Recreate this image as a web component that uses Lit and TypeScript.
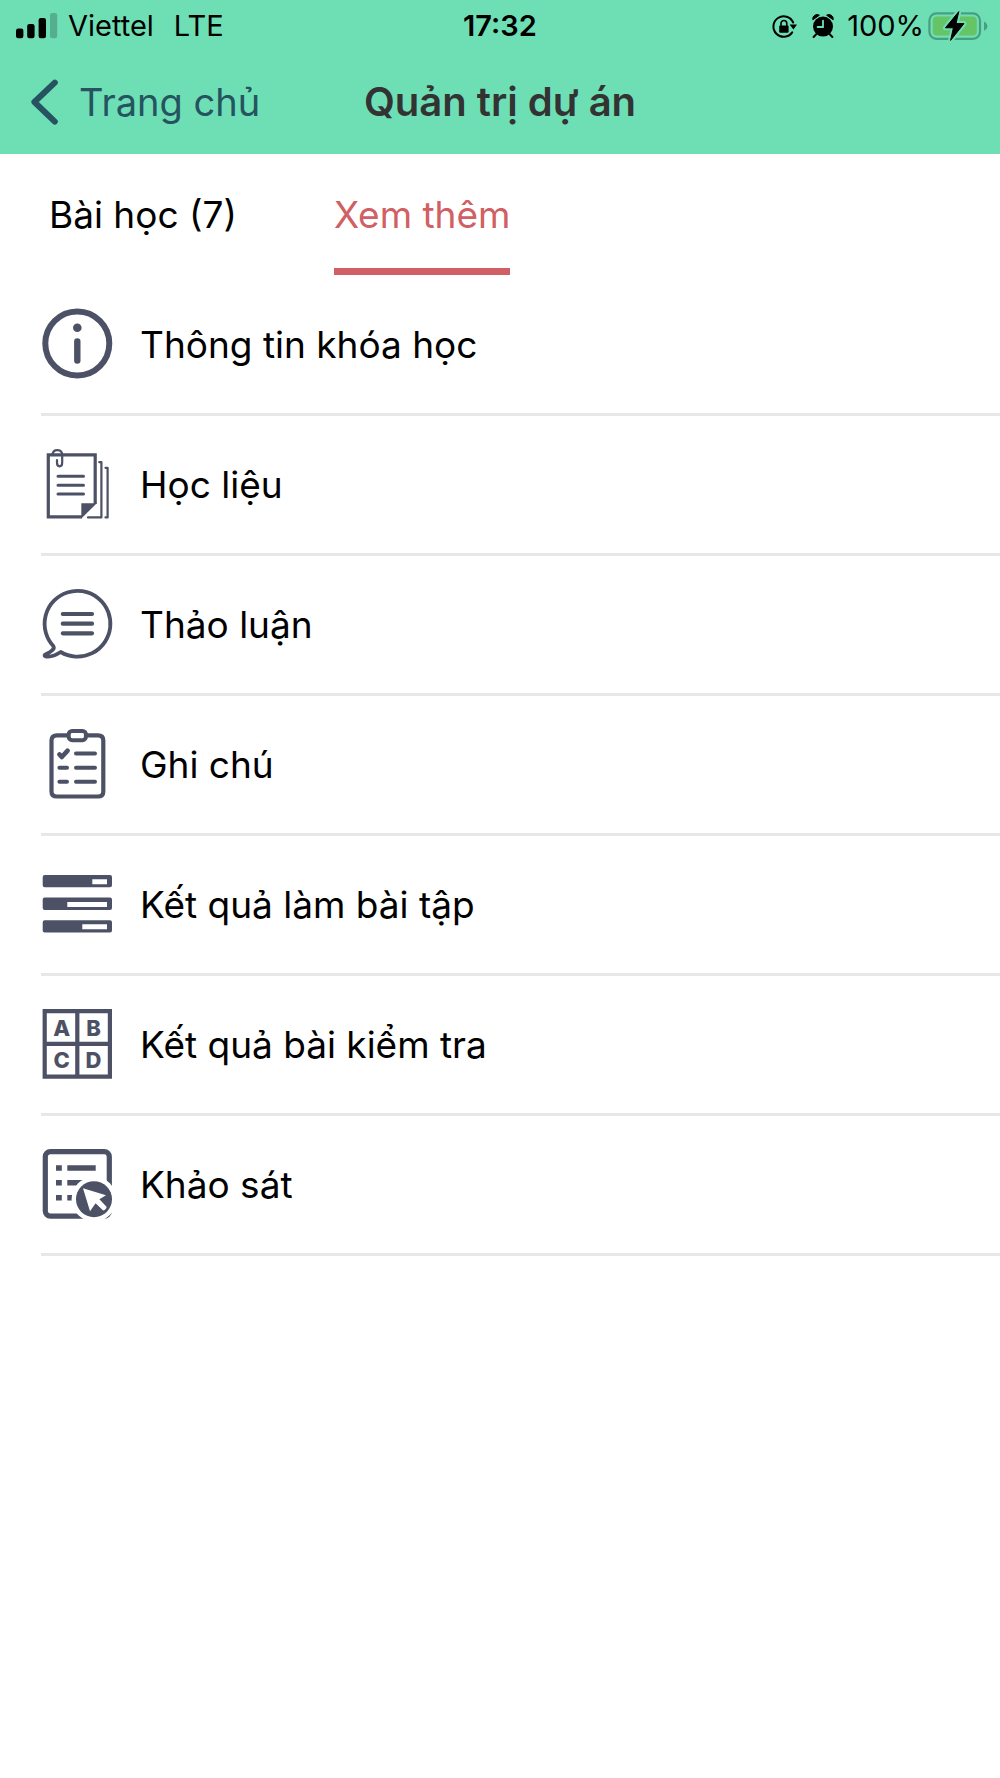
import { LitElement, html, css, svg, TemplateResult } from "lit";
import { customElement, state } from "lit/decorators.js";

interface MenuEntry {
  label: string;
  icon: TemplateResult;
}

const infoIcon = svg`
  <circle class="line" cx="35.3" cy="34.5" r="32" stroke-width="6"/>
  <circle class="solid" cx="35.3" cy="18.7" r="4.3"/>
  <path class="line" d="M35.3 32.4V51.6" stroke-width="6.4"/>`;

const documentsIcon = svg`
  <path class="line square" d="M40 67.8H6.3V5.8H53.2V55" stroke-width="3.2"/>
  <path class="solid" d="M39.3 54.3H54.8L39.3 69.4Z"/>
  <path class="line" d="M10.6 5C11.4-.3 20.2-.3 20.2 6V13.6C20.2 18.6 15 18.6 15 13.6V11" stroke-width="2.2"/>
  <path class="line" d="M16 27.3H41.5M16 36.3H41.5M16 45H41.5" stroke-width="3"/>
  <path class="line" d="M57.3 13.2H59.4V68.4H46M63.5 18.8H65.6V68.4H63.5" stroke-width="2.2"/>`;

const chatIcon = svg`
  <path class="line" d="M11.3 57A32.9 32.9 0 1 1 18.7 63C13.5 66.4 7.5 68.2 3.6 67.3C2 66.9 2.4 65.8 4.2 65.1C8.4 63.2 13.4 60 11.3 57Z" stroke-width="3.8"/>
  <path class="line" d="M20.8 25H50M20.8 34.7H50M20.8 44.3H50" stroke-width="4.2"/>`;

const checklistIcon = svg`
  <path class="line" d="M26 6.3H15Q9.5 6.3 9.5 11.3V62.5Q9.5 67.5 15 67.5H56Q61.3 67.5 61.3 62.5V11.3Q61.3 6.3 56 6.3H45" stroke-width="4.2"/>
  <rect class="line" x="26.7" y="2" width="17.2" height="9.2" rx="3.4" stroke-width="4"/>
  <path class="line" d="M17.4 25.4L19.8 28L25.6 21.6" stroke-width="4.6"/>
  <path class="line" d="M34 24.4H53M34 38.7H53M34 52.8H53M17.4 38.7H25M17.4 52.8H25" stroke-width="4"/>`;

const barsIcon = svg`
  <path class="solid" fill-rule="evenodd" d="M2.7 6H68Q70 6 70 8V16.3Q70 18.3 68 18.3H2.7Q.7 18.3 .7 16.3V8Q.7 6 2.7 6ZM50.3 10.3V15.3H65V10.3Z"/>
  <path class="solid" fill-rule="evenodd" d="M2.7 28.6H68Q70 28.6 70 30.6V38.9Q70 40.9 68 40.9H2.7Q.7 40.9 .7 38.9V30.6Q.7 28.6 2.7 28.6ZM25.3 32.9V37.9H65V32.9Z"/>
  <path class="solid" fill-rule="evenodd" d="M2.7 51.2H68Q70 51.2 70 53.2V61.5Q70 63.5 68 63.5H2.7Q.7 63.5 .7 61.5V53.2Q.7 51.2 2.7 51.2ZM40.3 55.3V60.3H65V55.3Z"/>`;

const choicesIcon = svg`
  <path class="line square" d="M2.7 2.1H67.9V67.7H2.7ZM35.3 2V68M2.7 34.9H68" stroke-width="4.2"/>
  <text class="letter" x="19.7" y="26.6">A</text>
  <text class="letter" x="51.5" y="26.6">B</text>
  <text class="letter" x="19.7" y="58.8">C</text>
  <text class="letter" x="51.5" y="58.8">D</text>`;

const surveyIcon = svg`
  <rect class="line" x="3.3" y="2.7" width="64" height="64.4" rx="5" stroke-width="5.2"/>
  <path class="solid" d="M14 16.2h5.8v5.6H14zM14 31h5.8v5.6H14zM14 46h5.8v5.6H14zM25.3 16.2H53.7v5.6H25.3zM25.3 31H42v5.6H25.3zM25.3 46H34v5.6H25.3z"/>
  <circle class="paper" cx="52" cy="50.2" r="22.4"/>
  <circle class="solid" cx="52" cy="50.2" r="18"/>
  <path class="paper" d="M41 39.2L64 46.3L57.4 50.2L64.3 57.4Q65 58.4 64.1 59.4L62.6 61Q61.6 61.8 60.6 60.9L53.6 54.2L48 62.2Z"/>`;

@customElement("status-bar")
export class StatusBar extends LitElement {
  static styles = css`
    :host {
      display: grid;
      grid-template-columns: 1fr auto 1fr;
      align-items: center;
      height: 51px;
      padding: 0 12px;
      font-size: 29px;
      line-height: 34px;
      color: #000;
    }
    .side {
      display: flex;
      align-items: center;
    }
    .signal {
      margin: 0 10px 0 4px;
    }
    .carrier {
      margin-right: 20px;
    }
    .time {
      font-weight: 600;
    }
    .end {
      justify-content: flex-end;
    }
    .percent {
      margin: 0 4px 0 12px;
    }
    .alarm {
      margin-left: 14px;
    }
    svg {
      display: block;
      flex: none;
    }
  `;

  render() {
    return html`
      <div class="side">
        <svg class="signal" width="42" height="26" viewBox="0 0 42 26" aria-hidden="true">
          <rect x="0" y="15.5" width="7.4" height="9.8" rx="2.2" />
          <rect x="11.2" y="11" width="7.4" height="14.3" rx="2.2" />
          <rect x="22.6" y="5" width="7.4" height="20.3" rx="2.2" />
          <rect x="34" y="0" width="7.2" height="25.3" rx="2.2" opacity=".22" />
        </svg>
        <span class="carrier">Viettel</span>
        <span>LTE</span>
      </div>
      <span class="time">17:32</span>
      <div class="side end">
        <svg width="26" height="26" viewBox="0 0 26 26" aria-hidden="true">
          <path d="M22.2 9.5A10.3 10.3 0 1 0 21.2 19.4" fill="none" stroke="#000" stroke-width="2" stroke-linecap="round" />
          <path d="M18.6 11.4H26L22.4 16.4Z" />
          <rect x="8.2" y="12.4" width="9.4" height="7.4" rx="1.2" />
          <path d="M10 13V10.4a2.9 2.9 0 0 1 5.8 0V13" fill="none" stroke="#000" stroke-width="1.6" />
        </svg>
        <svg class="alarm" width="24" height="26" viewBox="0 0 24 26" aria-hidden="true">
          <circle cx="12" cy="13.6" r="10" />
          <path d="M1.8 6.8A4.4 4.4 0 0 1 8.4 2.2ZM15.6 2.2A4.4 4.4 0 0 1 22.2 6.8Z" stroke="#000" stroke-linejoin="round" />
          <path d="M5 21.5L2.6 24M19 21.5L21.4 24" stroke="#000" stroke-width="2" stroke-linecap="round" />
          <path d="M12 7.6V14H6.6" fill="none" stroke="#6edfb5" stroke-width="1.8" stroke-linecap="round" />
        </svg>
        <span class="percent">100%</span>
        <svg width="60" height="32" viewBox="0 0 60 32" role="img" aria-label="100%">
          <rect x="1.4" y="3.4" width="50.6" height="25.4" rx="7" fill="none" stroke="#4a9e80" stroke-width="2.2" />
          <rect x="4.8" y="6.6" width="44" height="19" rx="4" fill="#65c466" />
          <path d="M56 11.4Q59.4 13 59.4 16T56 20.8Z" fill="#4a9e80" />
          <path d="M30.8 1.6L17.4 17.8H25.4L22.6 30.4L36 13.6H28Z" stroke="#6edfb5" stroke-width="5" stroke-linejoin="round" />
          <path d="M30.8 1.6L17.4 17.8H25.4L22.6 30.4L36 13.6H28Z" stroke="#000" stroke-linejoin="round" />
        </svg>
      </div>
    `;
  }
}

@customElement("course-menu")
export class CourseMenu extends LitElement {
  static properties = { entries: { attribute: false } };
  declare entries: MenuEntry[];

  constructor() {
    super();
    this.entries = [];
  }

  static styles = css`
    :host {
      display: block;
    }
    .list {
      list-style: none;
      margin: 0;
      padding: 1px 0 0 41px;
    }
    .item {
      border-bottom: 3px solid #e7e7e8;
    }
    .link {
      display: flex;
      align-items: center;
      gap: 28px;
      min-height: 136px;
      padding: 0 0 1px 1px;
      font-size: 37px;
      line-height: 46px;
      color: #000;
      text-decoration: none;
    }
    .label {
      padding-top: 2px;
    }
    .icon {
      flex: none;
      width: 70px;
      height: 70px;
      overflow: visible;
    }
    .line {
      fill: none;
      stroke: #4c5165;
      stroke-linecap: round;
      stroke-linejoin: round;
    }
    .square {
      stroke-linecap: butt;
      stroke-linejoin: miter;
    }
    .solid {
      fill: #4c5165;
    }
    .paper {
      fill: #fff;
    }
    .letter {
      fill: #4c5165;
      font-size: 22px;
      font-weight: 800;
      text-anchor: middle;
    }
  `;

  render() {
    return html`
      <ul class="list">
        ${this.entries.map(
          (entry) => html`
            <li class="item">
              <a class="link" href="#">
                <svg class="icon" viewBox="0 0 70 70" aria-hidden="true">${entry.icon}</svg>
                <span class="label">${entry.label}</span>
              </a>
            </li>
          `
        )}
      </ul>
    `;
  }
}

@customElement("app-root")
export class AppRoot extends LitElement {
  @state() private active = 1;

  private tabs = ["Bài học (7)", "Xem thêm"];

  private entries: MenuEntry[] = [
    { label: "Thông tin khóa học", icon: infoIcon },
    { label: "Học liệu", icon: documentsIcon },
    { label: "Thảo luận", icon: chatIcon },
    { label: "Ghi chú", icon: checklistIcon },
    { label: "Kết quả làm bài tập", icon: barsIcon },
    { label: "Kết quả bài kiểm tra", icon: choicesIcon },
    { label: "Khảo sát", icon: surveyIcon },
  ];

  static styles = css`
    :host {
      display: block;
      min-height: 100vh;
      background: #fff;
      font-family: Inter, "Liberation Sans", sans-serif;
    }
    .header {
      padding-bottom: 2px;
      background: #6edfb5;
    }
    .nav {
      display: grid;
      grid-template-columns: 1fr auto 1fr;
      align-items: center;
      height: 101px;
      padding: 0 30px;
      line-height: 48px;
    }
    .back {
      display: flex;
      align-items: center;
      gap: 20px;
      font-size: 38px;
      color: #25535f;
      text-decoration: none;
    }
    .chevron {
      flex: none;
    }
    .title {
      margin: 0;
      font-size: 40px;
      font-weight: 600;
      color: #333;
    }
    .tabs {
      display: flex;
      gap: 97px;
      padding: 0 49px;
    }
    .tab {
      height: 121px;
      padding: 8px 0 0;
      border: 0;
      border-bottom: 7px solid transparent;
      background: none;
      font: inherit;
      font-size: 37px;
      line-height: 46px;
      color: #000;
      cursor: pointer;
    }
    .tab.active {
      border-color: #d06063;
      color: #d06063;
    }
  `;

  render() {
    return html`
      <header class="header">
        <status-bar></status-bar>
        <nav class="nav">
          <a class="back" href="#">
            <svg class="chevron" width="29" height="46" viewBox="0 0 29 46" aria-hidden="true">
              <path d="M24.8 3.6L4.4 23L24.8 42.6" fill="none" stroke="#25535f" stroke-width="6" stroke-linecap="round" stroke-linejoin="round" />
            </svg>
            <span>Trang chủ</span>
          </a>
          <h1 class="title">Quản trị dự án</h1>
        </nav>
      </header>
      <div class="tabs" role="tablist">
        ${this.tabs.map(
          (tab, i) => html`
            <button
              class="tab ${i === this.active ? "active" : ""}"
              role="tab"
              aria-selected=${i === this.active}
              @click=${() => (this.active = i)}
            >
              ${tab}
            </button>
          `
        )}
      </div>
      <course-menu .entries=${this.entries}></course-menu>
    `;
  }
}
